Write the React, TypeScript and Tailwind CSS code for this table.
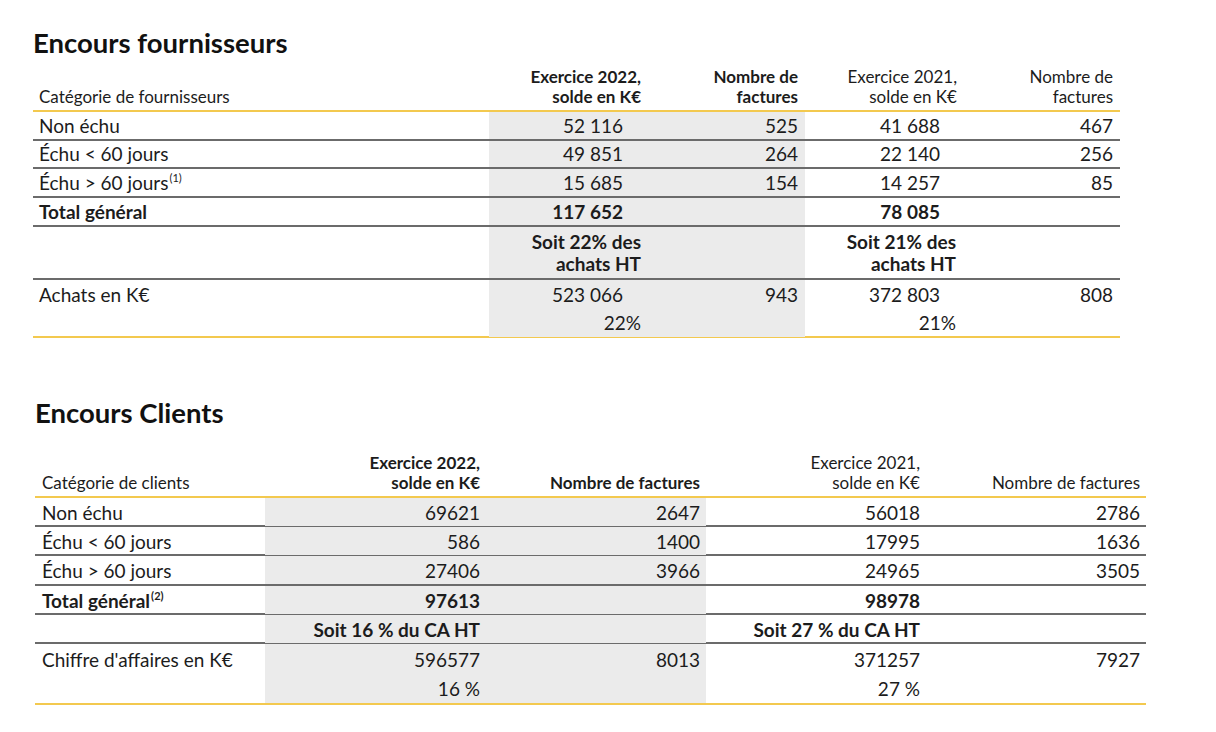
import React from "react";

type Cell = {
  lines: React.ReactNode[];
  bold?: boolean;
  pr?: string;
  gray?: boolean;
  align?: "left" | "right";
};

const FONT = { fontFamily: "Lato, 'Noto Sans', sans-serif" };

function Title({ children }: { children: React.ReactNode }) {
  return (
    <h2 className="text-[27.5px] leading-[32px] font-bold text-[#111]">{children}</h2>
  );
}

function T1Row({
  cells,
  h,
  last,
  pt,
  lh,
}: {
  cells: Cell[];
  h: string;
  last?: boolean;
  pt?: string;
  lh: string;
}) {
  return (
    <div
      className={`grid grid-cols-[456px_158px_158px_157px_158px] ${h} ${
        last ? "border-b-2 border-[#f3c94f]" : "border-b-2 border-[#6b6b6b]"
      }`}
    >
      {cells.map((c, i) => (
        <div
          key={i}
          className={`flex flex-col ${pt ?? ""} ${lh} ${c.gray ? "bg-[#ebebeb]" : ""} ${
            c.align === "left" ? "items-start pl-[6px]" : "items-end"
          } ${c.pr ?? ""} ${c.bold ? "font-bold" : ""}`}
        >
          {c.lines.map((l, j) => (
            <span key={j} className="whitespace-nowrap">
              {l}
            </span>
          ))}
        </div>
      ))}
    </div>
  );
}

function T2Row({
  cells,
  h,
  last,
  pt,
  lh,
}: {
  cells: Cell[];
  h: string;
  last?: boolean;
  pt?: string;
  lh: string;
}) {
  return (
    <div
      className={`grid grid-cols-[230px_221px_220px_220px_220px] ${h} ${
        last ? "border-b-2 border-[#f3c94f]" : "border-b-2 border-[#6b6b6b]"
      }`}
    >
      {cells.map((c, i) => (
        <div
          key={i}
          className={`flex flex-col ${pt ?? ""} ${lh} ${c.gray ? "bg-[#ebebeb]" : ""} ${
            c.align === "left" ? "items-start pl-[7px]" : "items-end pr-[6px]"
          } ${c.bold ? "font-bold" : ""}`}
        >
          {c.lines.map((l, j) => (
            <span key={j} className="whitespace-nowrap">
              {l}
            </span>
          ))}
        </div>
      ))}
    </div>
  );
}

const sup = (n: string) => (
  <sup className="text-[11px] relative -top-[8px] ml-[1px]">({n})</sup>
);

export default function App() {
  const t1 = (
    label: React.ReactNode,
    a: string,
    b: string,
    c: string,
    d: string,
    bold = false
  ): Cell[] => [
    { lines: [label], align: "left", bold },
    { lines: [a], gray: true, pr: "pr-[24px]", bold },
    { lines: [b], gray: true, pr: "pr-[7px]" },
    { lines: [c], pr: "pr-[22px]", bold },
    { lines: [d], pr: "pr-[7px]" },
  ];

  const t2 = (
    label: React.ReactNode,
    a: string,
    b: string,
    c: string,
    d: string,
    bold = false
  ): Cell[] => [
    { lines: [label], align: "left", bold },
    { lines: [a], gray: true, bold },
    { lines: [b], gray: true },
    { lines: [c], bold },
    { lines: [d] },
  ];

  return (
    <div className="min-h-[732px] w-[1216px] bg-white text-[#1c1c1c]" style={FONT}>
      {/* Encours fournisseurs */}
      <div className="pl-[33px] pt-[27px]">
        <Title>Encours fournisseurs</Title>
        <div className="w-[1087px] mt-[8px] text-[19px]">
          {/* header */}
          <div className="grid grid-cols-[456px_158px_158px_157px_158px] items-end text-[17px] leading-[20px] pb-[3px] border-b-2 border-[#f3c94f]">
            <div className="pl-[6px]">Catégorie de fournisseurs</div>
            <div className="flex flex-col items-end pr-[6px] font-bold">
              <span>Exercice 2022,</span>
              <span>solde en K€</span>
            </div>
            <div className="flex flex-col items-end pr-[7px] font-bold">
              <span>Nombre de</span>
              <span>factures</span>
            </div>
            <div className="flex flex-col items-end pr-[5px]">
              <span>Exercice 2021,</span>
              <span>solde en K€</span>
            </div>
            <div className="flex flex-col items-end pr-[7px]">
              <span>Nombre de</span>
              <span>factures</span>
            </div>
          </div>
          <T1Row h="h-[29px]" lh="leading-[27px]" cells={t1("Non échu", "52 116", "525", "41 688", "467")} />
          <T1Row h="h-[28px]" lh="leading-[26px]" cells={t1("Échu < 60 jours", "49 851", "264", "22 140", "256")} />
          <T1Row
            h="h-[29px]"
            lh="leading-[27px]"
            cells={t1(<>Échu &gt; 60 jours{sup("1")}</>, "15 685", "154", "14 257", "85")}
          />
          <T1Row h="h-[29px]" lh="leading-[27px]" cells={t1("Total général", "117 652", "", "78 085", "", true)} />
          <T1Row
            h="h-[53px]"
            lh="leading-[22px]"
            pt="pt-[4px]"
            cells={[
              { lines: [""], align: "left" },
              { lines: ["Soit 22% des", "achats HT"], gray: true, pr: "pr-[6px]", bold: true },
              { lines: [""], gray: true },
              { lines: ["Soit 21% des", "achats HT"], pr: "pr-[6px]", bold: true },
              { lines: [""] },
            ]}
          />
          <T1Row
            h="h-[58px]"
            lh="leading-[28px]"
            pt="pt-[1px]"
            last
            cells={[
              { lines: ["Achats en K€"], align: "left" },
              {
                lines: [
                  <span className="pr-[18px]">523 066</span>,
                  <span>22%</span>,
                ],
                gray: true,
                pr: "pr-[6px]",
              },
              { lines: ["943"], gray: true, pr: "pr-[7px]" },
              {
                lines: [
                  <span className="pr-[16px]">372 803</span>,
                  <span>21%</span>,
                ],
                pr: "pr-[6px]",
              },
              { lines: ["808"], pr: "pr-[7px]" },
            ]}
          />
        </div>
      </div>

      {/* Encours Clients */}
      <div className="pl-[35px] pt-[59px] pb-[20px]">
        <Title>Encours Clients</Title>
        <div className="w-[1111px] mt-[24px] text-[19px]">
          <div className="grid grid-cols-[230px_221px_220px_220px_220px] items-end text-[17px] leading-[20px] pb-[3px] border-b-2 border-[#f3c94f]">
            <div className="pl-[7px]">Catégorie de clients</div>
            <div className="flex flex-col items-end pr-[6px] font-bold">
              <span>Exercice 2022,</span>
              <span>solde en K€</span>
            </div>
            <div className="flex flex-col items-end pr-[6px] font-bold">
              <span>Nombre de factures</span>
            </div>
            <div className="flex flex-col items-end pr-[6px]">
              <span>Exercice 2021,</span>
              <span>solde en K€</span>
            </div>
            <div className="flex flex-col items-end pr-[6px]">
              <span>Nombre de factures</span>
            </div>
          </div>
          <T2Row h="h-[29px]" lh="leading-[27px]" pt="pt-[1px]" cells={t2("Non échu", "69621", "2647", "56018", "2786")} />
          <T2Row h="h-[29px]" lh="leading-[27px]" pt="pt-[1px]" cells={t2("Échu < 60 jours", "586", "1400", "17995", "1636")} />
          <T2Row h="h-[30px]" lh="leading-[27px]" pt="pt-[1px]" cells={t2("Échu > 60 jours", "27406", "3966", "24965", "3505")} />
          <T2Row
            h="h-[29px]"
            lh="leading-[27px]"
            pt="pt-[1px]"
            cells={t2(<>Total général{sup("2")}</>, "97613", "", "98978", "", true)}
          />
          <T2Row
            h="h-[29px]"
            lh="leading-[27px]"
            pt="pt-[1px]"
            cells={[
              { lines: [""], align: "left" },
              { lines: ["Soit 16 % du CA HT"], gray: true, bold: true },
              { lines: [""], gray: true },
              { lines: ["Soit 27 % du CA HT"], bold: true },
              { lines: [""] },
            ]}
          />
          <T2Row
            h="h-[61px]"
            lh="leading-[29px]"
            pt="pt-[1px]"
            last
            cells={[
              { lines: ["Chiffre d'affaires en K€"], align: "left" },
              { lines: ["596577", "16 %"], gray: true },
              { lines: ["8013"], gray: true },
              { lines: ["371257", "27 %"] },
              { lines: ["7927"] },
            ]}
          />
        </div>
      </div>
    </div>
  );
}
